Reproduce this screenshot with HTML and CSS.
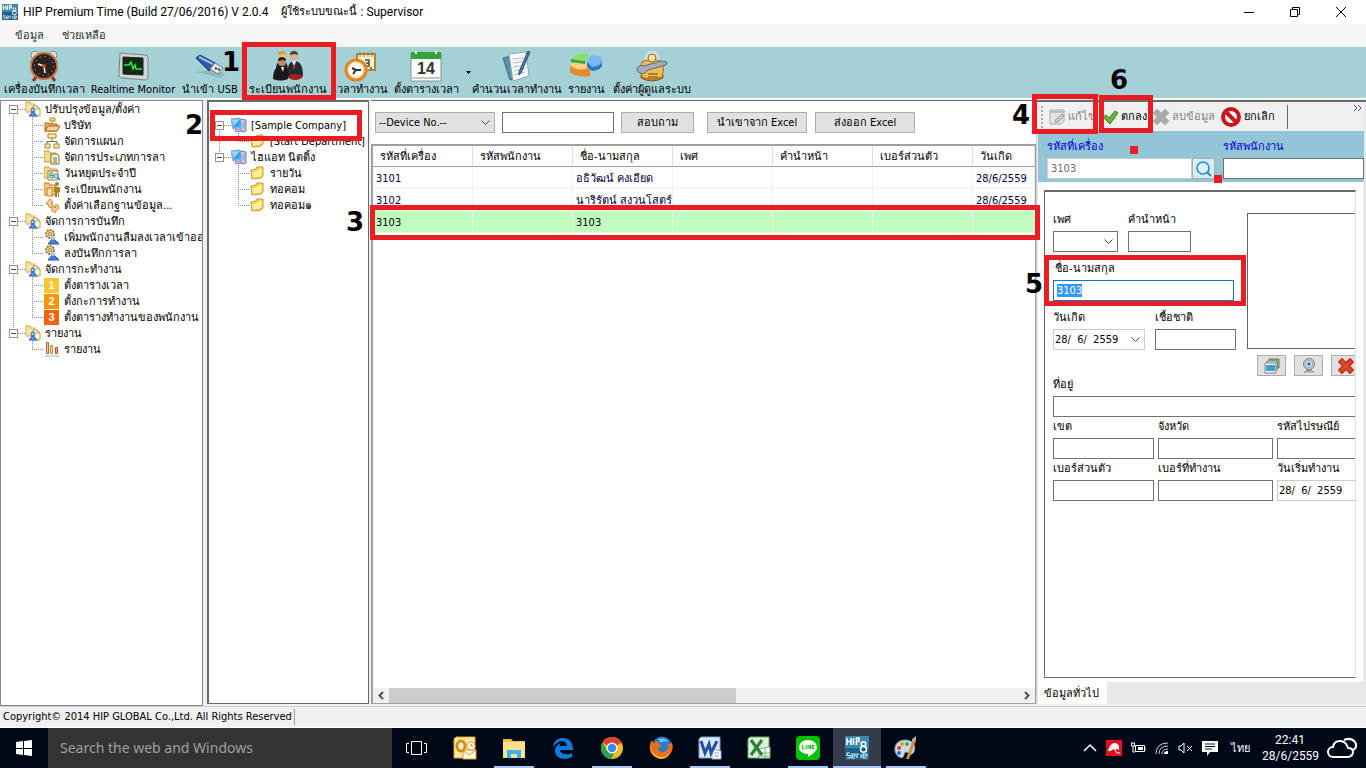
FILE: index.html
```html
<!DOCTYPE html>
<html lang="th">
<head>
    <meta charset="UTF-8">
    <meta name="viewport" content="width=device-width, initial-scale=1.0">
    <title>HIP Premium Time</title>
    <link rel="stylesheet" href="styles.css">
</head>
<body>
    <!-- shared icons -->
    <svg class="sprite" aria-hidden="true">
        <symbol id="i-hip" viewBox="0 0 24 24">
            <rect width="24" height="24" fill="#1d5f8a"/>
            <rect width="24" height="12" fill="#3a86ad"/>
            <path d="M2 2v7M6 2v7M2 5.500h4M8.500 2v7M11.500 9V2h2.500v3.500h-2.500" stroke="#fff" stroke-width="1.600" fill="none"/>
            <circle cx="18.500" cy="8" r="2.300" stroke="#fff" stroke-width="1.500" fill="none"/>
            <circle cx="18.500" cy="13.300" r="3" stroke="#fff" stroke-width="1.500" fill="none"/>
            <path d="M5 17H2v2.500h3V22H2M7 20h3v-2H7v4h3M12 22v-4h2M16 18v4M18 20h4v-2h-4v4h4" stroke="#d6ecf7" stroke-width="1.200" fill="none"/>
        </symbol>
        <symbol id="i-group" viewBox="0 0 16 16">
            <path d="M1 1h4l1 2h4v8H1z" fill="#fbe4a4" stroke="#d8a44c"/>
            <path d="M8 5h4l3 3v7H8z" fill="#fff8d4" stroke="#c8a04c"/>
            <path d="M12 5v3h3" fill="none" stroke="#c8a04c"/>
            <path d="M4 15l4-5 4 5z" fill="#4b8fe0" stroke="#2f68b8"/>
            <circle cx="8" cy="9" r="2" fill="#9cc8f6" stroke="#2f68b8"/>
        </symbol>
        <symbol id="i-company" viewBox="0 0 16 16">
            <path d="M6 1h5v3H6zM8 4v3" fill="#ffe680" stroke="#b58a1e"/>
            <path d="M1 6h4l1 1h7v7H1z" fill="#f2b45a" stroke="#a8621c"/>
            <path d="M1 14l3-5h12l-3 5z" fill="#ffd28c" stroke="#a8621c"/>
        </symbol>
        <symbol id="i-org" viewBox="0 0 16 16">
            <path d="M8 5v4M3 11V8.500h10V11" fill="none" stroke="#7a6a50"/>
            <path d="M4 1h8v4H4zM1 11h5v4H1zM10 11h5v4h-5z" fill="#fff0a0" stroke="#a8822c"/>
        </symbol>
        <symbol id="i-leave" viewBox="0 0 16 16">
            <path d="M0 2h5l1 2h6v9H0z" fill="#f8dc8c" stroke="#d09a3c"/>
            <path d="M7 5h6l2 2v8H7z" fill="#fffbd8" stroke="#6f6a40"/>
            <path d="M9 9h4M9 11h4M9 13h4" stroke="#58704c"/>
        </symbol>
        <symbol id="i-holiday" viewBox="0 0 16 16">
            <path d="M0 2h5l1 2h7v9H0z" fill="#f8dc8c" stroke="#d09a3c"/>
            <path d="M4 6h10v9H4z" fill="#fff" stroke="#8a7a4c"/>
            <path d="M6 8v5h3V8zM6 10.500h3" fill="none" stroke="#2e9a50"/>
            <circle cx="12" cy="11" r="2" fill="#d8f0ff" stroke="#3c78b0"/>
            <path d="M13.500 12.500L16 15" stroke="#3c78b0" stroke-width="1.500"/>
        </symbol>
        <symbol id="i-staff" viewBox="0 0 16 16">
            <path d="M0 2h5l1 2h6v10H0z" fill="#f8c878" stroke="#c8782c"/>
            <path d="M3 7h5v8H3z" fill="#fde3a0" stroke="#c8782c"/>
            <circle cx="13" cy="3" r="2" fill="#a88420"/>
            <path d="M10 6h6v5h-1v5h-1v-4h-1v4h-2v-5h-1z" fill="#a88420"/>
        </symbol>
        <symbol id="i-sync" viewBox="0 0 16 16">
            <path d="M2 7l4-5 3 4H7q1 2 2 2L7 11Q4 10 4 7z" fill="#fbd68a" stroke="#c8843a"/>
            <path d="M14 8q2 5-3 6v2l-4-3 3-4 1 2q1-1 0-3z" fill="#fbd68a" stroke="#c8843a"/>
        </symbol>
        <symbol id="i-gear" viewBox="0 0 16 16">
            <circle cx="6" cy="5" r="4" fill="#f8dc9c" stroke="#9a7434" stroke-width="2" stroke-dasharray="2 1"/>
            <circle cx="6" cy="5" r="1.500" fill="#fff" stroke="#9a7434"/>
            <path d="M4 15l5-6 6 6z" fill="#3f80d8" stroke="#2a5ba8"/>
            <circle cx="9" cy="9" r="2" fill="#a8ccf4"/>
        </symbol>
        <symbol id="i-bars" viewBox="0 0 16 16">
            <path d="M2.500 1.500h2v11h-2z" fill="#f7c8a8" stroke="#c8583c"/>
            <path d="M6.500 4.500h2v8h-2z" fill="#ffe38a" stroke="#d08a2c"/>
            <path d="M11.500 6.500h2v6h-2z" fill="#f5a08c" stroke="#c8483c"/>
            <path d="M1 15h14" stroke="#9fb2c8"/>
        </symbol>
        <symbol id="i-pc" viewBox="0 0 16 16">
            <path d="M9 2l6 1v11l-4 1-2-2z" fill="#c4cce6" stroke="#6c7cae"/>
            <path d="M13 5v7" stroke="#7f90c0"/>
            <path d="M0 2l9-1 2 9-9 2z" fill="#b4c4e4" stroke="#8f9cc4"/>
            <path d="M1 3l8-1 1 7-7 2z" fill="#2fa4f0"/>
            <path d="M1 3l8-1-6 7z" fill="#8fd6ff"/>
            <path d="M4 13l6-1 1 2-6 1z" fill="#c2cae0" stroke="#7f8db4"/>
        </symbol>
        <symbol id="i-folder" viewBox="0 0 16 16">
            <path d="M1 5l5-1 1-2h6v9l-2 2-9 1z" fill="#f5d35c" stroke="#c99c2c"/>
            <path d="M2 7l6-1 1-2h3l-1 7-8 2z" fill="#fff0a0"/>
        </symbol>
    </svg>

    <header class="titlebar">
        <svg class="ico16"><use href="#i-hip"/></svg>
        <h1>HIP Premium Time (Build 27/06/2016) V 2.0.4</h1>
        <span class="user">ผู้ใช้ระบบขณะนี้</span>
        <span>: Supervisor</span>
        <div class="window-controls">
            <button aria-label="Minimize"><svg width="12" height="12"><path d="M1 6.500h10" stroke="#000"/></svg></button>
            <button aria-label="Restore"><svg width="12" height="12"><path d="M1.500 3.500h7v7h-7zM3.500 3V1.500h7v7H9" stroke="#000" fill="none"/></svg></button>
            <button aria-label="Close"><svg width="12" height="12"><path d="M1 1l10 10M11 1L1 11" stroke="#000" fill="none"/></svg></button>
        </div>
    </header>

    <nav class="menubar">
        <a href="#">ข้อมูล</a>
        <a href="#">ช่วยเหลือ</a>
    </nav>

    <div class="toolbar">
        <button>
            <svg viewBox="0 0 32 32">
                <path d="M8 27l-3 4M24 27l3 4" stroke="#a03020" stroke-width="3"/>
                <circle cx="7" cy="5" r="4" fill="#d9dde0" stroke="#8a8f94"/><circle cx="25" cy="5" r="4" fill="#d9dde0" stroke="#8a8f94"/>
                <circle cx="16" cy="16" r="13" fill="#2a2220" stroke="#c8703c" stroke-width="2"/>
                <circle cx="16" cy="16" r="9.500" fill="none" stroke="#ddd" stroke-dasharray="1 4"/>
                <path d="M16 16l-6-2M16 16l1 7" stroke="#fff" stroke-width="1.500"/><circle cx="16" cy="16" r="2" fill="#d84020"/>
            </svg>
            <span>เครื่องบันทึกเวลา</span>
        </button>
        <button>
            <svg viewBox="0 0 32 32">
                <path d="M3 3l25 2q3 0 3 3v20q0 2-3 2L5 28q-3 0-3-3z" fill="#cfd4d6" stroke="#7c8488"/>
                <path d="M6 7l20 1v17L6 24z" fill="#0e2b14" stroke="#222"/>
                <path d="M7 15h5l2-3 2 7 2-4 1 4h6" stroke="#36e04c" stroke-width="1.500" fill="none"/>
            </svg>
            <span>Realtime Monitor</span>
        </button>
        <button>
            <svg viewBox="0 0 32 32">
                <path d="M3 22l24 6 4-4-10-5z" fill="#7ba0a6" opacity=".5"/>
                <path d="M2 8l4-3 15 8-6 8z" fill="#2a5ca4" stroke="#1a3c70"/>
                <path d="M5 7l14 7" stroke="#9cc0ee" stroke-width="2"/>
                <path d="M16 19l5-6 8 5-5 6z" fill="#e8eaec" stroke="#777"/>
                <path d="M21 18l2 1M24 19l2 1" stroke="#444" stroke-width="2"/>
            </svg>
            <span>นำเข้า USB</span>
        </button>
        <button>
            <svg viewBox="0 0 32 32">
                <circle cx="10" cy="6" r="4" fill="#ecc080"/><path d="M6 5q0-4 4-4t4 4l-2-1z" fill="#dfa030"/>
                <path d="M4 22q-1-11 6-11 6 0 6 9v6z" fill="#26282c"/>
                <circle cx="22" cy="6" r="4" fill="#dcae90"/><path d="M18 5q0-4 4-4t4 4l-3-1z" fill="#6a3424"/>
                <path d="M15 28q0-17 7-17 9 0 9 15z" fill="#24282e"/><path d="M16 27q3-4 7-3 5 0 8 2-2 4-8 4-5 0-7-3z" fill="#a81c1c"/>
                <path d="M20 11l2 8 2-8z" fill="#f0e8e4"/><path d="M22 13l-1 3 1 3 1-3z" fill="#b02020"/>
                <circle cx="10" cy="12" r="4" fill="#c08c64"/><path d="M6 11q0-4 4-4t4 4l-3-1z" fill="#2a1c18"/>
                <path d="M1 29q0-13 9-13 7 0 6 13-8 3-15 0z" fill="#17181c"/><path d="M9 17l2 5 1-5z" fill="#fff"/>
            </svg>
            <span>ระเบียนพนักงาน</span>
        </button>
        <button>
            <svg viewBox="0 0 32 32">
                <path d="M13 4h18v16H13z" fill="#fff2cc" stroke="#b48434" stroke-width="2"/>
                <path d="M16 2v5M20 2v5M24 2v5M28 2v5" stroke="#8c7a60"/>
                <path d="M21 10h4v3h-3 3v3h-4M26 18h2" stroke="#444" stroke-width="1.500" fill="none"/>
                <circle cx="12" cy="20" r="10" fill="#fff" stroke="#e58324" stroke-width="3"/>
                <circle cx="12" cy="20" r="8" fill="none" stroke="#ffc880"/>
                <path d="M9 24l3-4h5M12 20l-4-2" stroke="#333" stroke-width="2" fill="none"/>
            </svg>
            <span>เวลาทำงาน</span>
        </button>
        <button>
            <svg viewBox="0 0 32 32">
                <path d="M1 3h30v27q0 1-1 1H2q-1 0-1-1z" fill="#fff" stroke="#8a9090"/>
                <path d="M1 2h30v7H1z" fill="#35a33a"/>
                <path d="M6 1v3M26 1v3" stroke="#e8f8e0" stroke-width="2"/>
                <path d="M2 28h28" stroke="#c4c8c8" stroke-width="2"/>
                <text x="16" y="24" text-anchor="middle" class="cal-day">14</text>
            </svg>
            <span>ตั้งตารางเวลา</span>
        </button>
        <button class="drop" aria-label="More"><svg viewBox="0 0 5 3"><path d="M0 0h5L2.500 3z"/></svg></button>
        <button>
            <svg viewBox="0 0 32 32">
                <path d="M2 8l13-3 6 22-12 3z" fill="#5b8fae" stroke="#3c6a88"/>
                <path d="M8 4l17-2 3 24-16 5z" fill="#f7f9fb" stroke="#98a4b0"/>
                <path d="M11 9l12-1M12 13l12-2M12 17l12-2M13 21l12-3M13 25l11-3" stroke="#b4bcc8"/>
                <path d="M27 1l2 1-9 21-2 2 0-3z" fill="#4d7fb4" stroke="#2b4c74"/>
            </svg>
            <span>คำนวนเวลาทำงาน</span>
        </button>
        <button>
            <svg viewBox="0 0 32 32">
                <path d="M0 15v7q7 6 20 4v-8z" fill="#e08c2c"/>
                <path d="M0 15q4-3 13-3l7 6q-14 4-20-3z" fill="#ffd080"/>
                <path d="M1 9v3l14 2V9z" fill="#40a038"/>
                <path d="M1 9Q5 3 19 4l-3 7q-8 0-15-2z" fill="#8ce068"/>
                <path d="M17 12v5l5 4q10-1 10-6v-5z" fill="#2e72c4"/>
                <path d="M17 12l4-7q11 0 11 5 0 6-10 7z" fill="#78b8f4"/>
            </svg>
            <span>รายงาน</span>
        </button>
        <button>
            <svg viewBox="0 0 32 32">
                <path d="M5 28q11 6 22 0v-3H5z" fill="#d08a20" stroke="#865414"/>
                <path d="M6 12q-3 7 0 15 10 4 20 0 3-8 0-15-9-5-20 0z" fill="#eebf50" stroke="#9a6c1c"/>
                <path d="M10 10q0-8 6-8t6 8" fill="none" stroke="#d4dae0" stroke-width="3"/>
                <circle cx="16" cy="8" r="4" fill="#f8e4a0" stroke="#9a6c1c"/>
                <path d="M1 19q2-5 7-3l17-5 6 1-1 3-18 5q-3 5-8 3-3-1-3-4z" fill="#a4aebc" stroke="#5c6878"/>
                <path d="M12 24h10M12 27h10" stroke="#a06c18" stroke-width="1.500"/>
            </svg>
            <span>ตั้งค่าผู้ดูแลระบบ</span>
        </button>
    </div>

    <main class="workspace">
        <aside class="panel nav-panel">
            <ul class="tree">
                <li>
                    <div class="node"><i class="toggle"></i><svg class="ico16"><use href="#i-group"/></svg><a href="#">ปรับปรุงข้อมูล/ตั้งค่า</a></div>
                    <ul>
                        <li class="node"><svg class="ico16"><use href="#i-company"/></svg><a href="#">บริษัท</a></li>
                        <li class="node"><svg class="ico16"><use href="#i-org"/></svg><a href="#">จัดการแผนก</a></li>
                        <li class="node"><svg class="ico16"><use href="#i-leave"/></svg><a href="#">จัดการประเภทการลา</a></li>
                        <li class="node"><svg class="ico16"><use href="#i-holiday"/></svg><a href="#">วันหยุดประจำปี</a></li>
                        <li class="node"><svg class="ico16"><use href="#i-staff"/></svg><a href="#">ระเบียนพนักงาน</a></li>
                        <li class="node"><svg class="ico16"><use href="#i-sync"/></svg><a href="#">ตั้งค่าเลือกฐานข้อมูล...</a></li>
                    </ul>
                </li>
                <li>
                    <div class="node"><i class="toggle"></i><svg class="ico16"><use href="#i-group"/></svg><a href="#">จัดการการบันทึก</a></div>
                    <ul>
                        <li class="node"><svg class="ico16"><use href="#i-gear"/></svg><a href="#">เพิ่มพนักงานลืมลงเวลาเข้าออก</a></li>
                        <li class="node"><svg class="ico16"><use href="#i-gear"/></svg><a href="#">ลงบันทึกการลา</a></li>
                    </ul>
                </li>
                <li>
                    <div class="node"><i class="toggle"></i><svg class="ico16"><use href="#i-group"/></svg><a href="#">จัดการกะทำงาน</a></div>
                    <ul>
                        <li class="node"><b class="step step-1">1</b><a href="#">ตั้งตารางเวลา</a></li>
                        <li class="node"><b class="step step-2">2</b><a href="#">ตั้งกะการทำงาน</a></li>
                        <li class="node"><b class="step step-3">3</b><a href="#">ตั้งตารางทำงานของพนักงาน</a></li>
                    </ul>
                </li>
                <li>
                    <div class="node"><i class="toggle"></i><svg class="ico16"><use href="#i-group"/></svg><a href="#">รายงาน</a></div>
                    <ul>
                        <li class="node"><svg class="ico16"><use href="#i-bars"/></svg><a href="#">รายงาน</a></li>
                    </ul>
                </li>
            </ul>
        </aside>

        <aside class="panel dept-panel">
            <ul class="tree">
                <li>
                    <div class="node"><i class="toggle"></i><svg class="ico16"><use href="#i-pc"/></svg><a href="#">[Sample Company]</a></div>
                    <ul>
                        <li class="node"><svg class="ico16"><use href="#i-folder"/></svg><a href="#">[Start Department]</a></li>
                    </ul>
                </li>
                <li>
                    <div class="node"><i class="toggle"></i><svg class="ico16"><use href="#i-pc"/></svg><a href="#">ไฮแอท นิตติ้ง</a></div>
                    <ul>
                        <li class="node"><svg class="ico16"><use href="#i-folder"/></svg><a href="#">รายวัน</a></li>
                        <li class="node"><svg class="ico16"><use href="#i-folder"/></svg><a href="#">ทอคอม</a></li>
                        <li class="node"><svg class="ico16"><use href="#i-folder"/></svg><a href="#">ทอคอม๑</a></li>
                    </ul>
                </li>
            </ul>
        </aside>

        <section class="list">
            <form class="filters">
                <select class="grey" aria-label="Device"><option>--Device No.--</option></select>
                <input type="text" aria-label="Search text">
                <button type="button" class="btn">สอบถาม</button>
                <button type="button" class="btn wide">นำเขาจาก Excel</button>
                <button type="button" class="btn wide">ส่งออก Excel</button>
            </form>
            <div class="grid">
                <table>
                    <thead>
                        <tr><th>รหัสที่เครื่อง</th><th>รหัสพนักงาน</th><th>ชื่อ-นามสกุล</th><th>เพศ</th><th>คำนำหน้า</th><th>เบอร์ส่วนตัว</th><th class="last">วันเกิด</th></tr>
                    </thead>
                    <tbody>
                        <tr><td>3101</td><td></td><td>อธิวัฒน์ คงเอียด</td><td></td><td></td><td></td><td>28/6/2559</td></tr>
                        <tr><td>3102</td><td></td><td>นาริรัตน์ สงวนโสตร์</td><td></td><td></td><td></td><td>28/6/2559</td></tr>
                        <tr class="selected"><td>3103</td><td></td><td>3103</td><td></td><td></td><td></td><td></td></tr>
                    </tbody>
                </table>
                <div class="scrollbar">
                    <svg width="16" height="15"><path d="M10 4L6.500 7.500 10 11" fill="none" stroke="#505050" stroke-width="2"/></svg>
                    <div class="track"><div class="thumb"></div></div>
                    <svg width="16" height="15"><path d="M6 4l3.500 3.500L6 11" fill="none" stroke="#505050" stroke-width="2"/></svg>
                </div>
            </div>
        </section>

        <section class="detail">
            <div class="actions">
                <i class="grip"></i>
                <button disabled>
                    <svg class="ico16" viewBox="0 0 16 16"><path d="M1 1h14v11l-3 3H1z" fill="#e4e4e4" stroke="#aaa"/><path d="M1 2h14v2H1z" fill="#bbb"/><path d="M6 13l1-3 6-5 2 2-6 6z" fill="#ccc" stroke="#999"/></svg>
                    แก้ไข
                </button>
                <button>
                    <svg class="ico16" viewBox="0 0 16 16"><path d="M1 8l3-2 3 3 6-7 3 2-8 11z" fill="#6cb33c" stroke="#3f7f22"/></svg>
                    ตกลง
                </button>
                <button disabled>
                    <svg class="ico16" viewBox="0 0 16 16"><path d="M4 1l4 4 4-4 3 3-4 4 4 4-3 3-4-4-4 4-3-3 4-4-4-4z" fill="#aaa" stroke="#aaa" stroke-width="2" stroke-linejoin="round"/></svg>
                    ลบข้อมูล
                </button>
                <button>
                    <svg class="ico20" viewBox="0 0 20 20"><circle cx="10" cy="10" r="8" fill="#fff" stroke="#c8181c" stroke-width="4"/><path d="M4 4l12 12" stroke="#c8181c" stroke-width="4"/></svg>
                    ยกเลิก
                </button>
                <i class="divider"></i>
                <svg class="more" width="9" height="6"><path d="M1 0l3 3-3 3M5 0l3 3-3 3" fill="none" stroke="#4a4a90"/></svg>
            </div>
            <div class="ids">
                <div class="field">
                    <label for="device-id">รหัสที่เครื่อง</label>
                    <div class="lookup">
                        <input type="text" id="device-id" value="3103" readonly>
                        <button aria-label="Find"><svg class="ico16" viewBox="0 0 16 16"><circle cx="7" cy="7" r="6" fill="#d8f2ff" stroke="#2a8abc" stroke-width="1.500"/><path d="M11 11l4 4" stroke="#2a8abc" stroke-width="2"/></svg></button>
                    </div>
                </div>
                <div class="field">
                    <label for="emp-id">รหัสพนักงาน</label>
                    <input type="text" id="emp-id">
                </div>
            </div>
            <div class="tab-page">
                <form class="profile">
                    <div class="top">
                        <div class="basics">
                            <div class="row">
                                <div class="field sex"><label for="sex">เพศ</label><select id="sex"><option></option></select></div>
                                <div class="field prefix"><label for="prefix">คำนำหน้า</label><input type="text" id="prefix"></div>
                            </div>
                            <div class="field name"><label for="fullname">ชื่อ-นามสกุล</label><input type="text" id="fullname" value="3103"></div>
                            <div class="row">
                                <div class="field date"><label for="birthday">วันเกิด</label><select id="birthday"><option>28/&nbsp; 6/&nbsp; 2559</option></select></div>
                                <div class="field nation"><label for="nation">เชื้อชาติ</label><input type="text" id="nation"></div>
                            </div>
                        </div>
                        <div class="photo">
                            <div class="frame"></div>
                            <div class="photo-buttons">
                                <button type="button" class="btn" aria-label="Browse"><svg class="ico16" viewBox="0 0 16 16"><path d="M5 1h10v9H5z" fill="#8fb878" stroke="#5c7c50"/><path d="M3 3h10v9H3z" fill="#dfe8ee" stroke="#708090"/><path d="M1 5h11v10H1z" fill="#fff" stroke="#708090"/><path d="M2 7h9v6H2z" fill="#3f9cdc"/></svg></button>
                                <button type="button" class="btn" aria-label="Camera"><svg class="ico16" viewBox="0 0 16 16"><path d="M3 15l3-3h4l3 3M6 15l1-2h2l1 2" fill="none" stroke="#777"/><circle cx="8" cy="6" r="5.500" fill="#ccd2da" stroke="#777"/><circle cx="8" cy="6" r="3.500" fill="#f4f8fc" stroke="#8a98a8"/><circle cx="8" cy="6" r="1.800" fill="#2468b8"/></svg></button>
                                <button type="button" class="btn" aria-label="Remove"><svg class="ico16" viewBox="0 0 16 16"><path d="M4 1l4 4 4-4 3 3-4 4 4 4-3 3-4-4-4 4-3-3 4-4-4-4z" fill="#e0492c" stroke="#c43c20" stroke-width="2" stroke-linejoin="round"/></svg></button>
                            </div>
                        </div>
                    </div>
                    <div class="address">
                        <div class="field full"><label for="addr">ที่อยู่</label><input type="text" id="addr"></div>
                        <div class="field"><label for="district">เขต</label><input type="text" id="district"></div>
                        <div class="field"><label for="province">จังหวัด</label><input type="text" id="province"></div>
                        <div class="field"><label for="zip">รหัสไปรษณีย์</label><input type="text" id="zip"></div>
                        <div class="field"><label for="mobile">เบอร์ส่วนตัว</label><input type="text" id="mobile"></div>
                        <div class="field"><label for="work">เบอร์ที่ทำงาน</label><input type="text" id="work"></div>
                        <div class="field date"><label for="start">วันเริ่มทำงาน</label><select id="start"><option>28/&nbsp; 6/&nbsp; 2559</option></select></div>
                    </div>
                </form>
            </div>
            <div class="tabs"><a href="#">ข้อมูลทั่วไป</a></div>
        </section>
    </main>

    <footer class="statusbar"><span>Copyright© 2014 HIP GLOBAL Co.,Ltd. All Rights Reserved</span></footer>

    <div class="taskbar">
        <button class="start" aria-label="Start"><svg width="16" height="16"><path d="M0 2l7-1v7H0zM8 1l8-1v8H8zM0 9h7v6l-7-1zM8 9h8v7l-8-1z" fill="#fff"/></svg></button>
        <input type="search" placeholder="Search the web and Windows" aria-label="Search">
        <div class="apps">
            <button aria-label="Task view"><svg viewBox="0 0 24 24"><path d="M7.500 5.500h10v13h-10zM5 7.500H2.500v9H5M20 7.500h2.500v9H20" fill="none" stroke="#fff"/></svg></button>
            <button aria-label="Outlook"><svg viewBox="0 0 24 24"><path d="M3 1h19v21H1V3z" fill="#fbe6a8" stroke="#e0a030"/><path d="M10 14h13v9H10z" fill="#fff8e0" stroke="#e0a030"/><path d="M10 14l6 5 7-5" fill="none" stroke="#e0a030"/><circle cx="18" cy="10" r="4" fill="#fff" stroke="#e0a030"/><path d="M18 8v2h2" stroke="#c07818" fill="none"/><ellipse cx="8" cy="10" rx="4" ry="5" fill="#fff6d8" stroke="#dc8c14" stroke-width="3"/></svg></button>
            <button class="open" aria-label="Explorer"><svg viewBox="0 0 24 24"><path d="M1 3h8l2 2h12v17H1z" fill="#f0c04c"/><path d="M1 6h22v16H1z" fill="#ffe08c"/><path d="M5 22v-8h14v8h-4v-4H9v4z" fill="#38b4ec"/></svg></button>
            <button aria-label="Edge"><svg viewBox="0 0 24 24"><path d="M2 11C3 4 7 2 12 2c7 0 10 5 10 12H9c0 4 7 6 12 3v4C13 25 4 22 4 15c0-4 3-7 6-8-1 1-1.500 2-1.500 3H16c0-6-9-7-14 1z" fill="#0c7cdc"/></svg></button>
            <button class="open" aria-label="Chrome"><svg viewBox="0 0 24 24"><circle cx="12" cy="12" r="11" fill="#e8c020"/><path d="M12 12L2.500 6.500A11 11 0 0 1 21.500 6.500z" fill="#dc4030"/><path d="M12 1a11 11 0 0 1 9.500 6H12z" fill="#dc4030"/><path d="M2.500 6.500A11 11 0 0 0 11 23l5-9H7z" fill="#30a050"/><circle cx="12" cy="12" r="5.500" fill="#fff"/><circle cx="12" cy="12" r="4.200" fill="#4088f0"/></svg></button>
            <button aria-label="Firefox"><svg viewBox="0 0 24 24"><circle cx="13" cy="10" r="9.500" fill="#2a7cc8"/><path d="M9 3q7-2 11 3-5-2-8 1z" fill="#68c0ec"/><path d="M3 4q0 2 2 3 3-2 5-1-1 2 1 3l2 1-4 2q0 4 5 4 6-1 5-8 4 1 3-3 4 7-1 13-5 6-13 4Q-1 18 1 9q0-3 2-5z" fill="#e8701c"/><path d="M2 10q1 10 10 11 7 0 9-6-1 8-9 8Q2 22 2 10z" fill="#f8b030"/></svg></button>
            <button class="open" aria-label="Word"><svg viewBox="0 0 24 24"><path d="M3 1h19v21H1V3z" fill="#dbe7f8" stroke="#7c9cd4"/><path d="M14 13l9 2v8h-9z" fill="#fff" stroke="#8ca8d8"/><path d="M16 17h5M16 20h5" stroke="#7c9cd4"/><path d="M3 5l4 12 4-9 2 9L19 5" fill="none" stroke="#2450a4" stroke-width="3"/></svg></button>
            <button aria-label="Excel"><svg viewBox="0 0 24 24"><path d="M3 1h19v21H1V3z" fill="#dcf0d8" stroke="#68a868"/><path d="M12 13l11-2v11H12z" fill="#fff" stroke="#74b074"/><path d="M12 17h11M12 20h11M18 12v10" stroke="#74b074"/><path d="M4 4l11 15M15 4L4 19" stroke="#288038" stroke-width="3"/></svg></button>
            <button class="open" aria-label="LINE"><svg viewBox="0 0 24 24"><rect width="24" height="24" rx="4" fill="#00c300"/><path d="M12 4c5 0 9 3 9 7.500 0 4-5 7-9 9.500v-3c-5 0-9-2.500-9-6.500S7 4 12 4z" fill="#fff"/><path d="M6.500 9v4h2M10 9v4M12 13V9l2.500 4V9M18.500 9.500H16v3h2.500M16 11h2" fill="none" stroke="#00c300"/></svg></button>
            <button class="open current" aria-label="HIP"><svg><use href="#i-hip"/></svg></button>
            <button class="open" aria-label="Paint"><svg viewBox="0 0 24 24"><path d="M11 4C4 4 0 9 1 15c1 5 6 8 8 6 2-1 0-4 3-5 3 0 3 3 6 2 4-2 5-14-7-14z" fill="#c8dcec" stroke="#7898b4"/><circle cx="5" cy="12" r="2" fill="#d83c30"/><circle cx="8" cy="8" r="2" fill="#f0a020"/><circle cx="13" cy="8" r="2" fill="#40a848"/><circle cx="5" cy="17" r="2" fill="#2c68c8"/><path d="M12 23l6-17 3 1-6 16z" fill="#e08c34"/><path d="M18 6l0-3 4-3 0 5-1 2z" fill="#c8a080"/></svg></button>
        </div>
        <div class="tray">
            <svg viewBox="0 0 16 16"><path d="M2 11l6-6 6 6" fill="none" stroke="#fff" stroke-width="1.500"/></svg>
            <svg viewBox="0 0 16 16"><rect width="16" height="16" fill="#e01020"/><path d="M2 11Q4 3 9 3q5 1 4 7-2-2-4 0-2-2-4 1z" fill="#fff"/><path d="M9 10l2 3h3" fill="none" stroke="#fff"/></svg>
            <svg viewBox="0 0 16 16"><path d="M5.500 5.500h9v6h-9zM1.500 3v3h3V3M3 6v6h2M2 2v2M4 2v2M15 7v3" fill="none" stroke="#fff"/><path d="M8 7h5v3H8z" fill="#fff"/></svg>
            <svg viewBox="0 0 16 16"><path d="M2 14Q2 3 14 3M5 14Q5 6 14 6M8 14q0-5 6-5" fill="none" stroke="#ccc"/><path d="M10 14q0-3 4-3v3z" fill="#fff"/></svg>
            <svg viewBox="0 0 16 16"><path d="M1 6h2l3-3v10l-3-3H1zM9 6l5 5M14 6l-5 5" fill="none" stroke="#fff"/></svg>
            <svg viewBox="0 0 16 16"><path d="M0 1h16v11H8l-3 4v-4H0z" fill="#fff"/><path d="M3 4h10M3 6.500h10M3 9h7" stroke="#081020"/></svg>
            <span class="lang">ไทย</span>
            <div class="clock"><time>22:41</time><time>28/6/2559</time></div>
            <svg class="weather" viewBox="0 0 32 22"><path d="M7 20a5 5 0 0 1 0-10q1-6 7-6 6 0 8 7 5 0 5 4t-5 5zM18 3q7-3 11 2 3 5-2 8" fill="none" stroke="#fff" stroke-width="2"/></svg>
        </div>
    </div>

    <!-- step markers over the window -->
    <div class="marks">
        <i class="box box-1"></i><b class="num num-1">1</b>
        <i class="box box-2"></i><b class="num num-2">2</b>
        <i class="box box-3"></i><b class="num num-3">3</b>
        <i class="box box-4"></i><b class="num num-4">4</b>
        <i class="box box-5"></i><b class="num num-5">5</b>
        <i class="box box-6"></i><b class="num num-6">6</b>
        <i class="dot dot-1"></i>
        <i class="dot dot-2"></i>
    </div>

    <script>
        const nameInput = document.getElementById('fullname');
        nameInput.focus();
        nameInput.select();
    </script>
</body>
</html>
```
FILE: styles.css
```css
* {
    margin: 0;
    padding: 0;
    box-sizing: border-box;
}

body {
    position: relative;
    display: flex;
    flex-direction: column;
    height: 100vh;
    overflow: hidden;
    background: #f0f0f0;
    color: #000;
    font-family: 'DejaVu Sans Condensed', 'Noto Sans', sans-serif;
    font-size: 11px;
    line-height: 16px;
    white-space: nowrap;
}

a {
    color: inherit;
    text-decoration: none;
}

ul {
    list-style: none;
}

button,
input,
select {
    font: inherit;
    color: inherit;
}

button {
    border: none;
    background: none;
}

svg {
    flex: none;
    display: block;
}

.sprite {
    display: none;
}

.ico16 {
    width: 16px;
    height: 16px;
}

.ico20 {
    width: 20px;
    height: 20px;
}

/* title and menu */
.titlebar {
    display: flex;
    align-items: center;
    height: 24px;
    padding: 0 2px;
    background: #fff;
    font-family: Roboto, sans-serif;
    font-size: 12px;
}

.titlebar h1 {
    margin-left: 5px;
    font-size: 12px;
    font-weight: normal;
}

.titlebar .user {
    margin: 0 4px 0 12px;
    font-size: 11px;
}

.window-controls {
    display: flex;
    margin-left: auto;
}

.window-controls button {
    display: flex;
    justify-content: center;
    width: 46px;
}

.menubar {
    display: flex;
    align-items: center;
    gap: 18px;
    height: 23px;
    padding-left: 15px;
    background: #f5f5f5;
    color: #333;
}

.toolbar {
    display: grid;
    grid-template-columns: 88px 90px 64px 92px 52px 80px 10px 82px 56px 76px;
    height: 52px;
    border-bottom: 1px solid #fff;
    background: #a3d1d6;
}

.toolbar button {
    display: flex;
    flex-direction: column;
    align-items: center;
    padding-top: 3px;
}

.toolbar svg {
    width: 32px;
    height: 32px;
}

.toolbar .drop {
    align-items: flex-start;
    padding-top: 24px;
}

.toolbar .drop svg {
    width: 5px;
    height: 3px;
}

.cal-day {
    font: bold 16px 'Liberation Sans', sans-serif;
    fill: #333;
}

/* main area */
.workspace {
    flex: 1;
    display: flex;
    min-height: 0;
    padding-top: 1px;
    border-bottom: 1px solid #d0d0d0;
}

.panel {
    flex: none;
    overflow: hidden;
    border: 1px solid #828790;
    background: #fff;
}

.nav-panel {
    width: 203px;
    padding-left: 8px;
}

.dept-panel {
    width: 162px;
    margin: 0 2px 2px 4px;
    padding: 15px 0 0 6px;
    border-width: 2px 1px 1px 2px;
    border-color: #696969;
}

.node {
    display: flex;
    align-items: center;
    gap: 4px;
    height: 16px;
}

.node a {
    padding-top: 2px;
}

.toggle {
    width: 16px;
    height: 9px;
    margin-right: -4px;
    background:
        linear-gradient(#334b8f, #334b8f) 2px 4px / 5px 1px no-repeat,
        linear-gradient(#fff, #fff) 1px 1px / 7px 7px no-repeat,
        linear-gradient(#919191, #919191) 0 0 / 9px 9px no-repeat,
        repeating-linear-gradient(90deg, #888 0 1px, transparent 1px 2px) 9px 4px / 7px 1px no-repeat;
}

.tree > li {
    background: repeating-linear-gradient(#888 0 1px, transparent 1px 2px) 4px 8px / 1px 100% no-repeat;
}

.tree > li + li {
    background-position: 4px 0;
}

.tree > li:last-child {
    background-size: 1px 8px;
}

.tree ul {
    padding-left: 23px;
}

.tree ul .node {
    padding-left: 12px;
    background:
        repeating-linear-gradient(#888 0 1px, transparent 1px 2px) 0 0 / 1px 100% no-repeat,
        repeating-linear-gradient(90deg, #888 0 1px, transparent 1px 2px) 0 8px / 11px 1px no-repeat;
}

.tree ul .node:last-child {
    background-size: 1px 8px, 11px 1px;
}

.step {
    width: 15px;
    height: 15px;
    margin-right: 1px;
    color: #fff;
    font-family: 'Liberation Sans', sans-serif;
    line-height: 15px;
    text-align: center;
}

.step-1 {
    background: #fdc62f;
}

.step-2 {
    background: #fc9505;
}

.step-3 {
    background: #f9610c;
}

/* employee list */
.list {
    flex: 1;
    display: flex;
    flex-direction: column;
    min-width: 0;
    margin-bottom: 2px;
    border-top: 1px solid #696969;
    background: #fff;
}

.filters {
    display: flex;
    align-items: center;
    gap: 7px;
    height: 43px;
    padding-left: 4px;
}

input[type="text"],
select {
    width: 100%;
    height: 21px;
    padding: 0 3px;
    border: 1px solid #707070;
    border-radius: 0;
    outline: none;
    background: #fff;
}

select {
    appearance: none;
    background: #fff url("data:image/svg+xml,%3Csvg xmlns='http://www.w3.org/2000/svg' width='9' height='6'%3E%3Cpath d='M0.500 0.500l4 4 4-4' fill='none' stroke='%23444'/%3E%3C/svg%3E") right 4px center no-repeat;
}

.filters select {
    width: 120px;
    border-color: #adadad;
    background-color: #e1e1e1;
}

.filters input[type="text"] {
    width: 112px;
}

.btn {
    height: 21px;
    border: 1px solid #adadad;
    background: #e1e1e1;
}

.filters .btn {
    width: 73px;
}

.filters .wide {
    width: 100px;
}

.filters .btn + .wide {
    margin-left: 1px;
}

.filters .btn:not(.wide) + .wide {
    margin-left: 6px;
}

.grid {
    flex: 1;
    display: flex;
    flex-direction: column;
    justify-content: space-between;
    border: 1px solid #a0a0a0;
    border-width: 2px 1px 1px 2px;
}

.grid table {
    width: 100%;
    border-collapse: separate;
    border-spacing: 0;
    table-layout: fixed;
}

.grid th {
    width: 100px;
    height: 21px;
    padding: 2px 0 0 7px;
    border-right: 1px solid #e0e0e0;
    border-bottom: 1px solid #a0a0a0;
    font-weight: normal;
    text-align: left;
}

.grid .last {
    width: auto;
}

.grid td {
    height: 22px;
    padding: 2px 0 0 3px;
    border-right: 1px solid #f0f0f0;
    border-bottom: 1px solid #f0f0f0;
    color: #000040;
}

.grid .selected td {
    background: #c0ffc0;
    color: #000;
}

.scrollbar {
    display: flex;
    height: 15px;
    background: #f0f0f0;
}

.track {
    flex: 1;
}

.thumb {
    width: 55%;
    height: 15px;
    background: #cdcdcd;
}

/* employee detail */
.detail {
    flex: none;
    display: flex;
    flex-direction: column;
    width: 330px;
    margin-bottom: 2px;
    padding: 0 2px 0 1px;
    border-top: 2px solid #696969;
    border-left: 1px solid #d0d0d0;
    background: #e8e8e8;
}

.actions {
    display: flex;
    align-items: center;
    height: 29px;
    padding: 0 2px 0 3px;
    background: #f0f0f0;
}

.actions button {
    display: flex;
    align-items: center;
    gap: 3px;
    margin-left: 6px;
}

.actions button:disabled {
    color: #838383;
}

.grip {
    width: 2px;
    height: 22px;
    background: repeating-linear-gradient(#aaa 0 2px, transparent 2px 4px);
}

.divider {
    width: 1px;
    height: 24px;
    margin-left: 12px;
    background: #666;
}

.more {
    align-self: flex-start;
    margin: 3px 0 0 auto;
}

.field label {
    display: block;
    margin-bottom: 3px;
}

.ids {
    display: flex;
    gap: 8px;
    height: 51px;
    padding: 8px 0 0 9px;
    background: #93c5d7;
    color: #0000e0;
}

.ids .field:first-child {
    flex: none;
    width: 168px;
}

.ids .field:last-child {
    flex: 1;
}

.ids input {
    color: #6d6d6d;
}

.lookup {
    display: flex;
}

.lookup input[type="text"] {
    border-color: #ccc;
}

.lookup button {
    display: flex;
    align-items: center;
    justify-content: center;
    flex: none;
    width: 23px;
    border: 1px solid #adadad;
    background: #d8ecf4;
}

.tab-page {
    flex: 1;
    min-height: 0;
    margin-right: 1px;
    padding: 8px 7px 4px 6px;
    background: #fff;
}

.profile {
    height: 100%;
    padding: 20px 0 0 8px;
    overflow: hidden;
    border: 1px solid #696969;
    border-top-width: 2px;
    border-right-color: #e0e0e0;
}

.top,
.row {
    display: flex;
}

.top {
    gap: 11px;
}

.basics {
    flex: none;
    display: flex;
    flex-direction: column;
    gap: 9px;
    width: 183px;
}

.row {
    gap: 10px;
}

.sex {
    width: 65px;
}

.prefix {
    width: 63px;
}

.name {
    width: 181px;
}

.name label {
    padding-left: 2px;
}

#fullname:focus {
    border-color: #0078d7;
}

#fullname::selection {
    background: #3399ff;
    color: #fff;
}

.date {
    width: 93px;
}

.date select {
    border-color: #ccc;
    padding: 0 1px;
}

.nation {
    width: 81px;
}

.photo {
    flex: none;
    width: 150px;
    padding-top: 1px;
}

.frame {
    height: 136px;
    border: 1px solid #646464;
}

.photo-buttons {
    display: flex;
    gap: 8px;
    padding: 6px 0 0 10px;
}

.photo-buttons .btn {
    display: flex;
    align-items: center;
    justify-content: center;
    width: 29px;
}

.address {
    display: grid;
    grid-template-columns: 101px 115px 115px;
    gap: 2px 4px;
    padding-top: 1px;
}

.address .full {
    grid-column: 1 / -1;
}

.address .date {
    width: auto;
}

.tabs {
    display: flex;
    height: 22px;
}

.tabs a {
    width: 69px;
    padding: 4px 0 0 6px;
    background: #fff;
}

.statusbar {
    display: flex;
    align-items: center;
    height: 21px;
    padding-left: 3px;
    border-bottom: 1px solid #fff;
    background: #f0f0f0;
}

.statusbar span {
    padding-right: 2px;
    border-right: 1px solid #a0a0a0;
}

/* windows taskbar */
.taskbar {
    display: flex;
    height: 40px;
    background: #000818;
    color: #fff;
    font-family: 'Noto Sans', sans-serif;
}

.start {
    display: flex;
    align-items: center;
    justify-content: center;
    width: 48px;
}

.taskbar input {
    width: 344px;
    padding-left: 12px;
    border: none;
    background: #333;
    font-size: 14px;
}

.taskbar input::placeholder {
    color: #a0a0a0;
}

.apps {
    display: flex;
    gap: 1px;
}

.apps button {
    display: flex;
    align-items: center;
    justify-content: center;
    width: 48px;
}

.apps svg {
    width: 24px;
    height: 24px;
}

.apps .open {
    background: linear-gradient(#a8c6f4, #a8c6f4) center bottom / 40px 2px no-repeat;
}

.apps .current {
    background-color: #353b4a;
    background-size: 48px 2px;
}

.tray {
    display: flex;
    align-items: center;
    gap: 8px;
    margin-left: auto;
    padding-right: 8px;
}

.tray svg {
    width: 16px;
    height: 16px;
}

.lang {
    width: 28px;
    text-align: center;
}

.clock {
    width: 56px;
    text-align: center;
    font-family: Roboto, sans-serif;
    font-size: 12px;
}

.clock time {
    display: block;
}

.tray .weather {
    width: 32px;
    height: 22px;
}

/* step markers */
.marks {
    position: absolute;
    inset: 0;
    pointer-events: none;
}

.box,
.num,
.dot {
    position: absolute;
}

.box {
    border: 5px solid #ea1c24;
}

.box-1 {
    left: 242px;
    top: 42px;
    width: 94px;
    height: 58px;
}

.box-2 {
    left: 210px;
    top: 110px;
    width: 152px;
    height: 31px;
}

.box-3 {
    left: 370px;
    top: 205px;
    width: 670px;
    height: 35px;
}

.box-4 {
    left: 1032px;
    top: 94px;
    width: 66px;
    height: 40px;
}

.box-5 {
    left: 1044px;
    top: 255px;
    width: 202px;
    height: 51px;
}

.box-6 {
    left: 1099px;
    top: 95px;
    width: 54px;
    height: 38px;
}

.num {
    width: 18px;
    font-family: 'DejaVu Sans', sans-serif;
    font-size: 26px;
    line-height: 28px;
    text-align: center;
}

.num-1 {
    left: 222px;
    top: 48px;
}

.num-2 {
    left: 185px;
    top: 111px;
}

.num-3 {
    left: 346px;
    top: 208px;
}

.num-4 {
    left: 1012px;
    top: 101px;
}

.num-5 {
    left: 1025px;
    top: 270px;
}

.num-6 {
    left: 1110px;
    top: 66px;
}

.dot {
    width: 8px;
    height: 8px;
    background: #ea1c24;
}

.dot-1 {
    left: 1130px;
    top: 146px;
}

.dot-2 {
    left: 1214px;
    top: 175px;
}
```
